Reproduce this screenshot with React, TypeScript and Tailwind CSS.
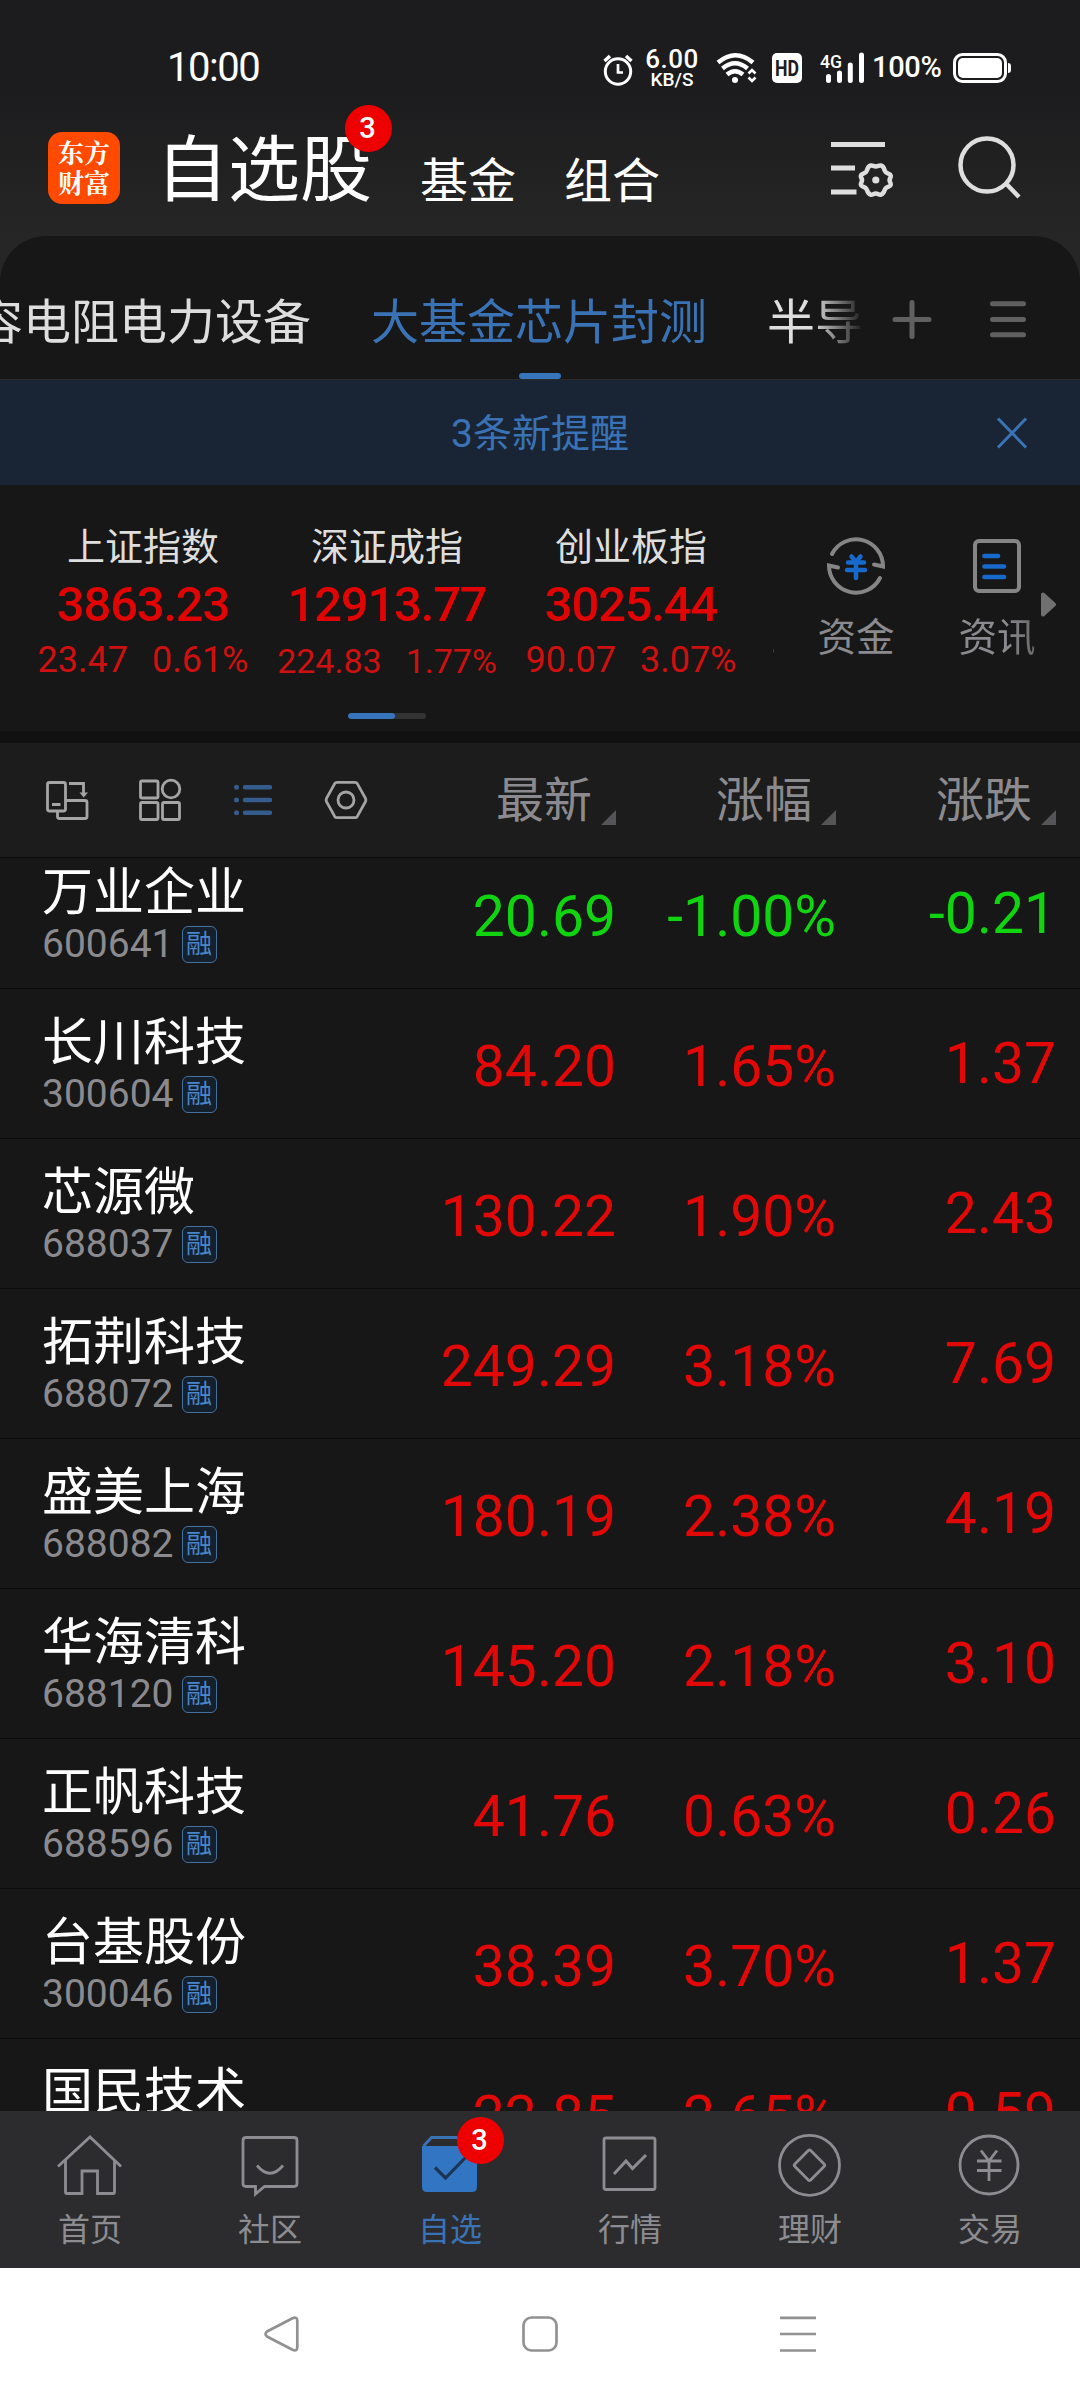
import type { ReactNode } from "react";

const indices = [
  { name: "上证指数", value: "3863.23", change: "23.47", pct: "0.61%", size: "text-[36px] gap-[24px]" },
  { name: "深证成指", value: "12913.77", change: "224.83", pct: "1.77%", size: "text-[34px] gap-[24px] pt-px" },
  { name: "创业板指", value: "3025.44", change: "90.07", pct: "3.07%", size: "text-[36px] gap-[24px]" },
];

const stocks = [
  { name: "万业企业", code: "600641", price: "20.69", pct: "-1.00%", change: "-0.21" },
  { name: "长川科技", code: "300604", price: "84.20", pct: "1.65%", change: "1.37" },
  { name: "芯源微", code: "688037", price: "130.22", pct: "1.90%", change: "2.43" },
  { name: "拓荆科技", code: "688072", price: "249.29", pct: "3.18%", change: "7.69" },
  { name: "盛美上海", code: "688082", price: "180.19", pct: "2.38%", change: "4.19" },
  { name: "华海清科", code: "688120", price: "145.20", pct: "2.18%", change: "3.10" },
  { name: "正帆科技", code: "688596", price: "41.76", pct: "0.63%", change: "0.26" },
  { name: "台基股份", code: "300046", price: "38.39", pct: "3.70%", change: "1.37" },
  { name: "国民技术", code: "300077", price: "22.85", pct: "2.65%", change: "0.59" },
];

function StatusBar() {
  return (
    <div className="flex h-[110px] items-start text-white">
      <span className="ml-[167px] mt-[48px] w-[433px] text-[40px] leading-[40px] tracking-[-1.5px]">10:00</span>
      <svg className="mt-[48px] h-[40px] w-[36px] shrink-0" viewBox="600 48 36 40" fill="none" stroke="currentColor">
        <circle cx="618" cy="71.500" r="12.700" strokeWidth="3" />
        <path d="M618 64v8.500h5" strokeWidth="2.700" />
        <path d="M604.500 61l5.500-5M631.500 61l-5.500-5" strokeWidth="3.500" />
      </svg>
      <div className="mt-[46px] flex w-[72px] flex-col items-center font-medium">
        <span className="text-[26px] leading-[27px] tracking-[0.5px]">6.00</span>
        <span className="text-[19px] leading-[14px]">KB/S</span>
      </div>
      <svg className="mt-[48px] h-[40px] w-[164px] shrink-0" viewBox="708 48 164 40" fill="none" stroke="currentColor">
        <path d="M718 62.500q17.500-14.500 35 0" strokeWidth="4.500" />
        <path d="M722.500 68.500q12.500-10.500 25 0" strokeWidth="4.500" />
        <path d="M727 74.500q8-6.500 16 0" strokeWidth="4.500" />
        <circle cx="735" cy="80" r="3" fill="currentColor" stroke="none" />
        <path d="M748.500 73.500l3.500-3.500 3.500 3.500M748.500 77.500l3.500 3.500 3.500-3.500" strokeWidth="2.600" />
        <rect x="772" y="53" width="30" height="30" rx="5" fill="currentColor" stroke="none" />
        <text x="787" y="76" textAnchor="middle" fill="#1c1c1e" stroke="none" className="text-[22px] font-bold" textLength="24" lengthAdjust="spacingAndGlyphs">HD</text>
        <text x="820" y="67.500" fill="currentColor" stroke="none" className="text-[19px] font-medium" textLength="22" lengthAdjust="spacingAndGlyphs">4G</text>
        <path d="M828.500 76.500v4M839.500 73v7.500M850.300 65v15.500M861.500 55v25.500" strokeWidth="5" strokeLinecap="round" />
      </svg>
      <span className="mt-[52px] w-[80px] text-[29px] font-medium leading-[30px] tracking-[-0.3px]">100%</span>
      <svg className="mt-[48px] h-[40px] w-[62px]" viewBox="952 48 62 40">
        <rect x="954.500" y="54.500" width="51" height="27" rx="8" fill="none" stroke="currentColor" strokeWidth="3" />
        <rect x="958" y="58" width="44" height="20" rx="5" fill="currentColor" />
        <path d="M1008 63q3 0 3 3v4q0 3-3 3z" fill="currentColor" />
      </svg>
    </div>
  );
}

function Badge({ className }: { className: string }) {
  return (
    <span
      className={`absolute flex size-[47px] items-center justify-center rounded-full bg-[#ee0000] pr-[2px] text-[29px] font-medium leading-none text-white ${className}`}
    >
      3
    </span>
  );
}

function Header() {
  return (
    <div className="flex h-[126px] items-start text-white">
      <div className="ml-[48px] mt-[22px] flex size-[72px] flex-col items-center rounded-[14px] bg-[#ff4a00] pt-[5px] font-['Noto_Serif_CJK_SC','Noto_Sans_CJK_SC',sans-serif] text-[26px] font-bold leading-[30px]">
        <span>东方</span>
        <span>财富</span>
      </div>
      <div className="relative ml-[36px] mt-[23px] w-[264px] text-[72px] leading-[76px]">
        自选股
        <Badge className="left-[189px] top-[-28px]" />
      </div>
      <span className="mt-[42px] w-[144px] text-[48px] leading-[60px]">基金</span>
      <span className="mt-[42px] w-[258px] text-[48px] leading-[60px]">组合</span>
      <svg className="mt-[20px] h-[76px] w-[80px]" viewBox="822 130 80 76" fill="none" stroke="#dedede" strokeWidth="5">
        <path d="M831 144.500h54M831 168h24M831 192h25.500" />
        <path
          d="M875.800 166.500c2.500 0 3-1.500 5.200-1 2.500.600 3.200 3.200 3.800 5.200.800 2.200 2 2.400 4 3.100 2.400.800 2.300 2.700 1.400 4.200-1 1.700-1 2.700 0 4.400.9 1.500 1 3.500-1.400 4.200-2 .6-3.200.9-4 3.100-.6 2-1.300 4.200-3.800 5-2.200.5-2.700-1.200-5.200-1.200s-3 1.700-5.200 1.200c-2.500-.8-3.200-3-3.800-5-.8-2.200-2-2.500-4-3.100-2.400-.7-2.300-2.700-1.400-4.200 1-1.700 1-2.700 0-4.400-.9-1.500-1-3.400 1.400-4.200 2-.7 3.200-.9 4-3.100.6-2 1.300-4.600 3.800-5.200 2.200-.5 2.700 1 5.200 1z"
          strokeWidth="4.500"
        />
        <circle cx="875.800" cy="180" r="3.600" fill="#dedede" stroke="none" />
      </svg>
      <svg className="ml-[48px] mt-[20px] h-[76px] w-[80px]" viewBox="950 130 80 76" fill="none" stroke="#dedede">
        <circle cx="987" cy="165" r="26.500" strokeWidth="4.500" />
        <path d="M1005.500 183l13.500 14" strokeWidth="4.500" />
      </svg>
    </div>
  );
}

function GroupTabs() {
  return (
    <div className="flex h-[144px] border-b border-[#2a2b2b] text-[48px] leading-[60px]">
      <div className="flex w-[870px] shrink-0 overflow-hidden whitespace-nowrap text-[#dedede] [mask-image:linear-gradient(to_right,black_812px,transparent_864px)]">
        <span className="ml-[-25px] mt-[57px] w-[396px] shrink-0">容电阻电力设备</span>
        <div className="flex w-[396px] shrink-0 flex-col pt-[57px] text-[#3a73b5]">
          <span>大基金芯片封测</span>
          <span className="ml-[148px] mt-[20px] h-[6px] w-[42px] rounded-full bg-[#3674bc]" />
        </div>
        <span className="mt-[57px]">半导</span>
      </div>
      <svg className="mt-[58px] h-[50px] w-[180px]" viewBox="870 294 180 50" fill="none" stroke="#606060" strokeWidth="5" strokeLinecap="round">
        <path d="M895 319.500h34M912 302.500v34" />
        <path d="M992.500 303.700h31M992.500 319.500h31M992.500 334.800h31" />
      </svg>
    </div>
  );
}

function NoticeBar() {
  return (
    <div className="flex h-[105px] items-center bg-[#192534] text-[39px] leading-[50px] text-[#3a73b5]">
      <span className="ml-[88px] flex-1 pt-[3px] text-center">3条新提醒</span>
      <svg className="mr-[48px] h-[40px] w-[40px]" viewBox="-20 -20 40 40" stroke="currentColor" strokeWidth="3">
        <path d="M-14-14.500l28 29M14-14.500l-28 29" />
      </svg>
    </div>
  );
}

function IndexPanel() {
  return (
    <div className="flex h-[246px]">
      <div className="w-[774px] overflow-hidden">
        <div className="flex w-[1000px] pl-[21px]">
          {indices.map((item) => (
            <div key={item.name} className="flex w-[244px] flex-col items-center">
              <span className="mt-[37px] text-[38px] leading-[50px] text-[#dedede]">{item.name}</span>
              <span className="mt-[6px] text-[49px] font-medium leading-[54px] tracking-[-1.2px] text-[#e00404]">
                {item.value}
              </span>
              <span className={`mt-[7px] flex h-[42px] items-center leading-[42px] text-[#cf1010] ${item.size}`}>
                <span>{item.change}</span>
                <span>{item.pct}</span>
              </span>
            </div>
          ))}
          <span className="ml-[17px] mt-[154px] text-[36px] leading-[42px] text-[#cc1212]">1</span>
        </div>
        <div className="ml-[348px] mt-[32px] flex h-[6px] w-[78px] overflow-hidden rounded-full bg-[#333333]">
          <span className="w-[47px] rounded-full bg-[#3674bc]" />
        </div>
      </div>
      <div className="flex w-[164px] flex-col items-center text-[38.500px] leading-[50px] text-[#8b8a8f]">
        <svg className="mt-[46px] h-[70px] w-[70px]" viewBox="-35 -35 70 70" fill="none" stroke="#858585" strokeWidth="4" strokeLinecap="round">
          <path d="M-24-12A27 27 0 0 1 27 0.500L18-1.500" />
          <path d="M24 12A27 27 0 0 1-27-0.500L-18 1.500" />
          <path d="M-4.500-9.500L0-4l4.500-5.500M-8-3.500H8M-9 4H9M0-4v16" stroke="#1769cc" strokeWidth="4.500" />
        </svg>
        <span className="mt-[12px]">资金</span>
      </div>
      <div className="flex w-[100px] flex-col items-center pl-[18px] text-[38.500px] leading-[50px] text-[#8b8a8f]">
        <svg className="mt-[46px] h-[70px] w-[70px]" viewBox="-35 -35 70 70" fill="none" stroke="#858585" strokeWidth="4" strokeLinecap="round">
          <rect x="-22" y="-25" width="44" height="50" rx="4" />
          <path d="M-12.500-10H1M-12.500 0.500H7M-12.500 11H7" stroke="#1769cc" strokeWidth="4.700" />
        </svg>
        <span className="mt-[12px] whitespace-nowrap [mask-image:linear-gradient(to_right,black_60%,rgba(0,0,0,0.7))]">资讯</span>
      </div>
      <svg className="mt-[105px] h-[28px] w-[18px]" viewBox="0 0 18 28" fill="#707070" stroke="#707070" strokeWidth="4" strokeLinejoin="round">
        <path d="M5 5v20l11-10z" transform="translate(0 -0.500)" />
      </svg>
    </div>
  );
}

function SortHeader({ label }: { label: string }) {
  return (
    <div className="flex items-start justify-end text-[48px] leading-[60px] text-[#8b8a8f]">
      <span className="mt-[28px]">{label}</span>
      <svg className="ml-[9px] mt-[67px] h-[15px] w-[15px]" viewBox="0 0 15 15" fill="#555557">
        <path d="M15 0v15H0z" />
      </svg>
    </div>
  );
}

function Toolbar() {
  return (
    <div className="grid h-[115px] grid-cols-[396px_220px_220px_220px] border-b border-[#0b0b0b] bg-[#1c1c1c]">
      <svg className="ml-[40px] mt-[31px] h-[52px] w-[340px]" viewBox="40 774 340 52" fill="none" stroke="#a5a5a5" strokeWidth="2.800">
        <rect x="47.500" y="782.500" width="18" height="28.500" rx="2" />
        <path d="M52 804.500h8.500M57.500 811v5.500q0 2 2 2H85q2 0 2-2V802.500q0-2-2-2H66M69 783.500h14.500v9.500" />
        <path d="M79.500 792.500h8.500l-4.300 5z" fill="#a5a5a5" stroke="none" />
        <rect x="140.500" y="781" width="17.500" height="17" rx="1.500" />
        <circle cx="171" cy="789" r="8.800" />
        <rect x="140.500" y="802.500" width="17.500" height="17" rx="1.500" />
        <rect x="162.500" y="802.500" width="17" height="17" rx="1.500" />
        <path d="M236.500 787.300v.01M236.500 800v.01M236.500 812.800v.01" stroke="#345c8c" strokeWidth="5" strokeLinecap="round" />
        <path d="M245 787.300h25M245 800h25M245 812.800h25" stroke="#345c8c" strokeWidth="4.500" strokeLinecap="round" />
        <path d="M337 782.300h18q1.500 0 2.300 1.300l8.200 14.800q.8 1.600 0 3.200l-8.200 14.800q-.8 1.300-2.300 1.300h-18q-1.500 0-2.300-1.300l-8.200-14.800q-.8-1.600 0-3.200l8.200-14.800q.8-1.300 2.300-1.300z" />
        <circle cx="346" cy="800" r="8" />
      </svg>
      <SortHeader label="最新" />
      <SortHeader label="涨幅" />
      <SortHeader label="涨跌" />
    </div>
  );
}

function StockList() {
  return (
    <div className="h-[1253px] overflow-hidden">
      <div className="-mt-[19px]">
        {stocks.map((s) => (
          <div
            key={s.code}
            className={`grid h-[150px] grid-cols-[396px_220px_220px_220px] items-start border-b border-[#0b0b0b] text-right text-[57px] leading-[60px] ${
              s.change.startsWith("-") ? "text-[#10d410]" : "text-[#e20808]"
            }`}
          >
            <div className="pl-[42px] text-left">
              <div className="mt-[26px] text-[51px] leading-[56px] text-white">{s.name}</div>
              <div className="mt-[3px] flex h-[40px] items-center text-[39px] leading-[40px] text-[#8b8a8f]">
                {s.code}
                <span className="ml-[8px] flex h-[37px] w-[35px] items-center justify-center rounded-[6px] border border-[#44719f] bg-[#14202c] text-[26px] leading-[34px] text-[#4a86cb]">
                  融
                </span>
              </div>
            </div>
            <span className="mt-[48px]">{s.price}</span>
            <span className="mt-[48px]">{s.pct}</span>
            <span className="mt-[45px]">{s.change}</span>
          </div>
        ))}
      </div>
    </div>
  );
}

function TabItem({ label, active, children }: { label: string; active?: boolean; children: ReactNode }) {
  return (
    <div className={`relative flex flex-1 flex-col items-center ${active ? "text-[#3a73b5]" : "text-[#8d8c91]"}`}>
      <svg className="mt-[18px] h-[72px] w-[72px]" viewBox="-36 -36 72 72" fill="none" stroke="currentColor" strokeWidth="2.800">
        {children}
      </svg>
      <span className="mt-[9px] text-[32px] leading-[40px]">{label}</span>
      {active && <Badge className="left-[97px] top-[6px]" />}
    </div>
  );
}

function TabBar() {
  return (
    <div className="flex h-[157px] bg-[#2c2c2e]">
      <TabItem label="首页">
        <path d="M-32 1.500L0-28 31 1.500" />
        <path d="M-24.500-5v32q0 1.500 1.500 1.500h15V6h15.500v22.500h15.500q1.500 0 1.500-1.500V-5" />
      </TabItem>
      <TabItem label="社区">
        <path d="M-24-27.500h48q3 0 3 3v43q0 3-3 3H-5.500l-9 7.500v-7.500H-24q-3 0-3-3v-43q0-3 3-3z" />
        <path d="M-13 0.500q13 15.500 26 0" />
      </TabItem>
      <TabItem label="自选" active>
        <path d="M-26.500-19l8-8.500H27v9" />
        <path d="M-28-19h55v41q0 5-5 5h-45q-5 0-5-5z" fill="#3275c3" stroke="none" />
        <path d="M-15 2.500L-4.500 13 16-8" stroke="#1d3554" strokeWidth="3.200" />
      </TabItem>
      <TabItem label="行情">
        <rect x="-26" y="-27" width="51" height="51.500" rx="2" />
        <path d="M-16 9L-4-4l6.500 7.500L16-10" strokeWidth="3" />
      </TabItem>
      <TabItem label="理财">
        <circle cx="-0.500" cy="0.300" r="30" />
        <path d="M-1.700-14.500q1.200-1.200 2.400 0l13.600 13.800q1 1 0 2L0.700 15.100q-1.200 1.200-2.400 0l-13.600-13.800q-1-1 0-2z" />
      </TabItem>
      <TabItem label="交易">
        <circle cx="-1" cy="0" r="29" />
        <path d="M-9-14.500L-1-4l8-10.500M-13-4h24.500M-13 5.500h24.500M-1-4v20" />
      </TabItem>
    </div>
  );
}

function SystemNav() {
  return (
    <div className="h-[132px] bg-white">
      <svg className="h-[132px] w-[1080px]" viewBox="0 2268 1080 132" fill="none" stroke="#919191" strokeWidth="2.700">
        <path d="M267 2331.500l25.500-13.300q4.800-2 4.800 2.800v26q0 4.800-4.800 2.800L267 2336.500q-3-2.500 0-5z" />
        <rect x="523.500" y="2317.500" width="33" height="33" rx="8" />
        <path d="M780 2317.800h36M780 2334h36M780 2350.500h36" />
      </svg>
    </div>
  );
}

export default function App() {
  return (
    <div className="h-[2400px] w-[1080px] overflow-hidden bg-[#171717] font-[Roboto,'Noto_Sans_CJK_SC',sans-serif]">
      <div className="bg-[linear-gradient(#1c1c1e_90px,#262626_236px)]">
        <StatusBar />
        <Header />
        <div className="overflow-hidden rounded-t-[46px] bg-[#171717]">
          <GroupTabs />
        </div>
      </div>
      <NoticeBar />
      <IndexPanel />
      <div className="h-[12px] bg-[#111111]" />
      <Toolbar />
      <StockList />
      <TabBar />
      <SystemNav />
    </div>
  );
}
